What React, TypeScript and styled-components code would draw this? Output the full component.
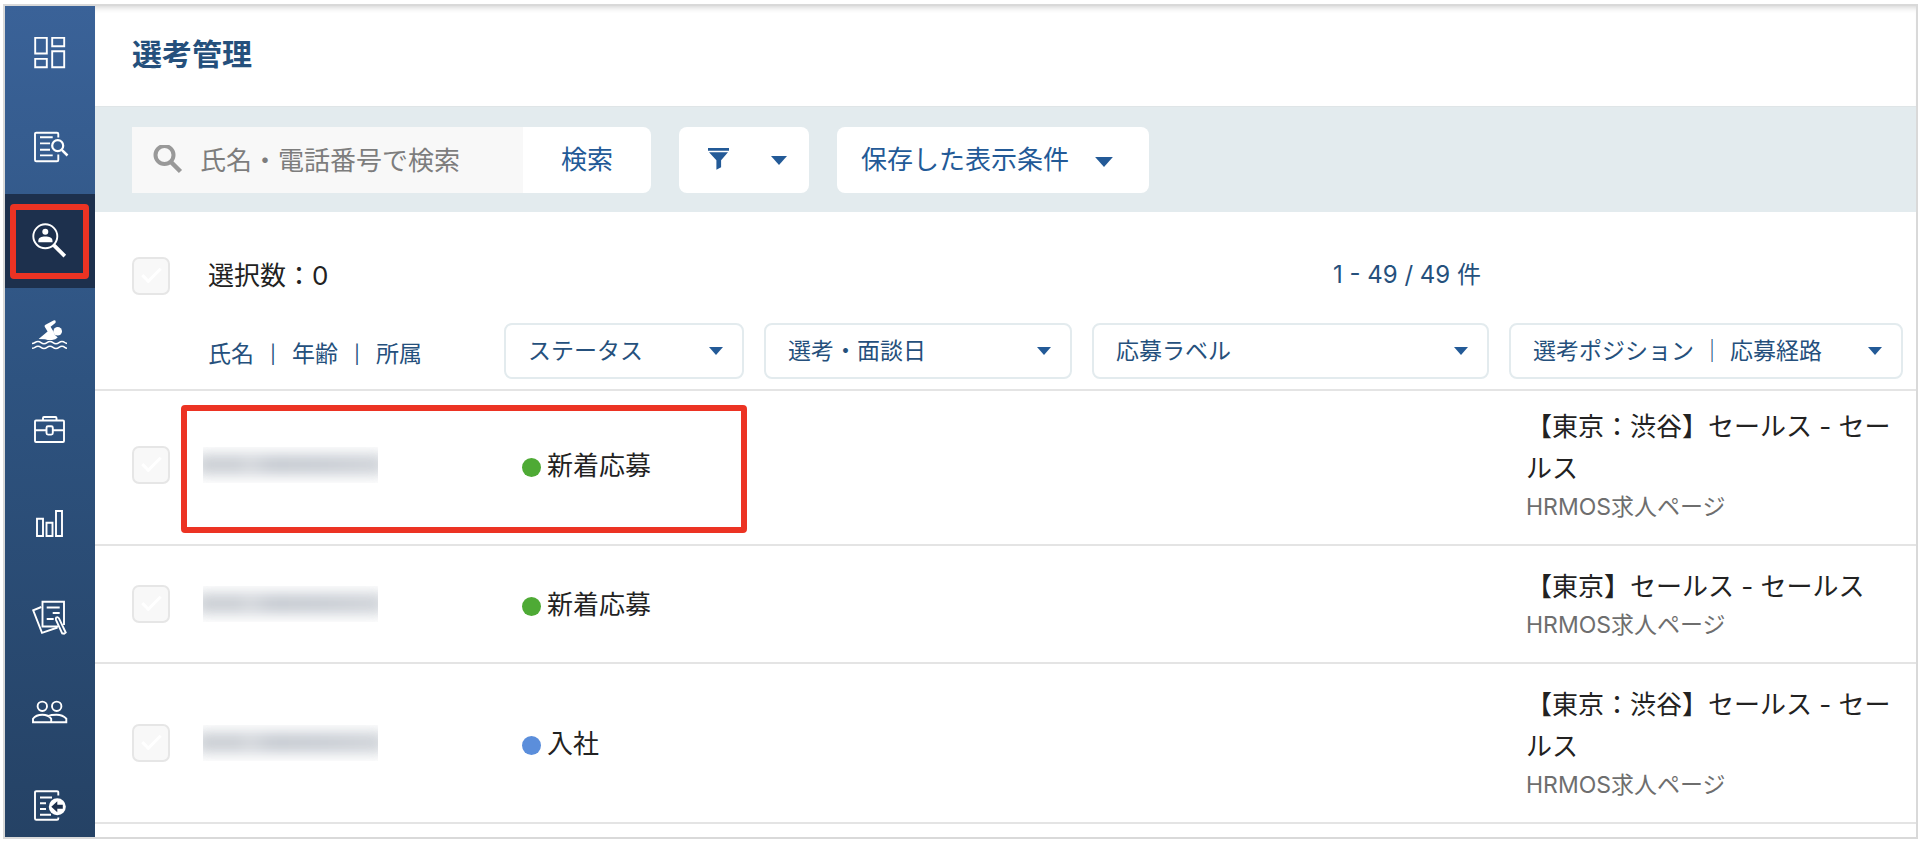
import React from "react";
import styled, { createGlobalStyle, css } from "styled-components";

const color = {
  navy: "#25507c",
  link: "#235a97",
  ink: "#222222",
  sub: "#6e6e6e",
  line: "#e4e4e4",
  frame: "#d9d9d9",
  field: "#f8f8f8",
  bar: "#e3ebee",
  active: "#1d304d",
  mark: "#ec3323",
};

const GlobalStyle = createGlobalStyle`
  *, *::before, *::after { box-sizing: border-box; }
  body {
    margin: 0;
    background: #fff;
    color: ${color.ink};
    font-family: Inter, "Noto Sans CJK JP", sans-serif;
    font-size: 26px;
    line-height: 42px;
  }
  button, input, select { font: inherit; color: inherit; margin: 0; }
`;

const Frame = styled.div`
  display: flex;
  height: calc(100vh - 11px);
  margin: 4px 8px 7px 3px;
  border: 2px solid ${color.frame};
  overflow: hidden;
`;

const Sidebar = styled.nav`
  flex: 0 0 90px;
  display: flex;
  flex-direction: column;
  overflow: hidden;
  background: linear-gradient(#3a6298, #2e5380 45%, #254265);
`;

const SideLink = styled.a<{ $active?: boolean }>`
  position: relative;
  flex: 0 0 94px;
  display: flex;
  align-items: center;
  justify-content: center;
  color: #fff;
  background: ${(p) => (p.$active ? color.active : "transparent")};
`;

const SideSvg = styled.svg`
  width: 36px;
  height: 36px;
  overflow: visible;
  fill: none;
  stroke: currentColor;
  stroke-width: 1.9;
`;

const markBorder = css`
  position: absolute;
  border: 6px solid ${color.mark};
  border-radius: 4px;
  pointer-events: none;
`;

const MenuMark = styled.span`
  ${markBorder}
  inset: 10px 6px 9px 5px;
`;

const RowMark = styled.span`
  ${markBorder}
  top: 14px;
  bottom: 11px;
  left: -7px;
  width: 566px;
`;

const Main = styled.main`
  flex: 1;
  min-width: 0;
`;

const PageHeader = styled.header`
  display: flex;
  align-items: center;
  height: 100px;
  padding: 0 37px 4px;
  box-shadow: inset 0 6px 6px -5px rgba(0, 0, 0, 0.2);
`;

const Title = styled.h1`
  margin: 0;
  font-size: 30px;
  font-weight: 700;
  color: ${color.navy};
`;

const Toolbar = styled.div`
  display: flex;
  gap: 28px;
  padding: 20px 37px 19px;
  border-top: 1px solid #dfe5e7;
  background: ${color.bar};
`;

const SearchForm = styled.form`
  display: flex;
  height: 66px;
`;

const SearchField = styled.label`
  display: flex;
  align-items: center;
  gap: 17px;
  width: 391px;
  padding: 0 0 0 21px;
  background: ${color.field};
`;

const SearchInput = styled.input`
  flex: 1;
  min-width: 0;
  height: 66px;
  padding: 0;
  border: 0;
  outline: 0;
  background: transparent;
  &::placeholder { color: #7d7d7d; opacity: 1; }
`;

const SearchButton = styled.button`
  width: 128px;
  padding: 0;
  border: 0;
  border-radius: 0 8px 8px 0;
  background: #fff;
  color: ${color.link};
`;

const ToolButton = styled.button<{ $gap: number }>`
  display: flex;
  align-items: center;
  gap: ${(p) => p.$gap}px;
  height: 66px;
  padding: 0 22px;
  border: 0;
  border-radius: 8px;
  background: #fff;
  color: ${color.link};
`;

const FilterButton = styled(ToolButton)`
  padding: 0 22px 0 29px;
`;

const SavedButton = styled(ToolButton)`
  padding: 0 36px 0 24px;
  > svg { margin-top: 4px; }
`;

const Summary = styled.div`
  display: flex;
  align-items: center;
  height: 111px;
  padding: 17px 435px 0 37px;
`;

const Selected = styled.span`
  margin-left: 38px;
`;

const Range = styled.span`
  margin-left: auto;
  padding-bottom: 2px;
  font-size: 24px;
  color: ${color.navy};
`;

const CheckBox = styled.input.attrs({ type: "checkbox" })`
  appearance: none;
  display: grid;
  place-items: center;
  width: 38px;
  height: 38px;
  border: 2px solid #e6e6e6;
  border-radius: 7px;
  background: ${color.field};
  &::before {
    content: "";
    width: 19px;
    height: 10px;
    margin-bottom: 6px;
    border: solid #fff;
    border-width: 0 0 3px 3px;
    transform: rotate(-45deg);
  }
`;

const Table = styled.table`
  width: 100%;
  table-layout: fixed;
  border-collapse: separate;
  border-spacing: 0;
`;

const Col = styled.col<{ $width?: number }>`
  width: ${(p) => (p.$width ? `${p.$width}px` : "auto")};
`;

const HeadCell = styled.th`
  padding: 0 10px 10px;
  border-bottom: 2px solid ${color.line};
  font-size: 23px;
  font-weight: 400;
  text-align: left;
  color: ${color.navy};
  &:first-child { padding: 0; }
  &:last-child { padding-right: 13px; }
`;

const NameHead = styled(HeadCell)`
  padding: 0 0 4px 20px;
`;

const Divider = styled.span`
  margin: 0 16px;
  font-size: 18px;
  vertical-align: 1px;
`;

const SelectBox = styled.div`
  position: relative;
  display: flex;
  align-items: center;
`;

const Select = styled.select`
  appearance: none;
  width: 100%;
  height: 56px;
  padding: 0 44px 0 22px;
  border: 2px solid ${color.bar};
  border-radius: 8px;
  background: #fff;
  color: ${color.navy};
`;

const CaretSvg = styled.svg`
  flex: none;
  fill: ${color.link};
`;

const SelectCaret = styled(CaretSvg)`
  position: absolute;
  right: 21px;
  pointer-events: none;
`;

const Cell = styled.td`
  position: relative;
  padding: 0;
  border-bottom: 2px solid ${color.line};
  vertical-align: middle;
`;

const CheckCell = styled(Cell)`
  padding-left: 37px;
`;

const NameCell = styled(Cell)`
  padding-left: 15px;
`;

const StatusCell = styled(Cell)`
  padding-left: 28px;
`;

const PositionCell = styled(Cell)`
  padding: 20px 13px 20px 27px;
`;

/* The first row is tucked 5px under the header line. */
const Row = styled.tr`
  &:first-child > td { padding-bottom: 5px; }
  &:first-child > ${PositionCell} {
    padding-top: 15px;
    padding-bottom: 20px;
  }
`;

const Masked = styled.div`
  position: relative;
  width: 175px;
  height: 36px;
  overflow: hidden;
  &::before, &::after {
    content: "";
    position: absolute;
    filter: blur(7px);
  }
  &::before {
    inset: 6px -8px 7px;
    background: #dfe2e6;
  }
  &::after {
    inset: 13px -4px 14px;
    background: linear-gradient(90deg, #bfc4ca 22%, #d3d6db 27%, #b6bcc5 40%, #bbc1c9 70%, #c8ccd2);
  }
`;

const Status = styled.span<{ $tone: string }>`
  display: flex;
  align-items: center;
  gap: 6px;
  padding-top: 2px;
  &::before {
    content: "";
    width: 19px;
    height: 19px;
    margin-top: 3px;
    border-radius: 50%;
    background: ${(p) => p.$tone};
  }
`;

const Position = styled.div`
  word-break: break-all;
`;

const Source = styled.div`
  font-size: 23px;
  line-height: 34px;
  color: ${color.sub};
`;

const Caret = ({ size = 16 }: { size?: number }) => (
  <CaretSvg width={size} height={size / 2 + 1} viewBox="0 0 16 9" aria-hidden>
    <path d="M0 0h16L8 9z" />
  </CaretSvg>
);

const menu = [
  {
    label: "ダッシュボード",
    icon: <path d="M3.2 2.9h11.6v15.6H3.2zM20.2 2.9h12v8.4h-12zM3.2 23.9h11.6v8.4H3.2zM20.2 16.3h12v16h-12z" />,
  },
  {
    label: "書類検索",
    icon: (
      <>
        <path d="M26.3 8.5V5q0-1.3-1.3-1.3H4.3Q3 3.7 3 5v26q0 1.3 1.3 1.3H25q1.3 0 1.3-1.3v-5.500" />
        <path d="M8 8.3h12.7M8 14.4h10M8 20.7h10M8 26.4h12.7" />
        <circle cx="25.7" cy="16.7" r="5.5" strokeWidth="2.2" />
        <path d="M29.8 20.8l5.7 5.7" strokeWidth="2.5" />
      </>
    ),
  },
  {
    label: "選考管理",
    active: true,
    icon: (
      <>
        <circle cx="13.3" cy="13.3" r="12" />
        <circle cx="13.3" cy="8.8" r="3" fill="currentColor" stroke="none" />
        <path d="M6.3 19.3v-1.5c0-3 3-4.3 7-4.3s7.2 1.3 7.2 4.3v1.5z" fill="currentColor" stroke="none" />
        <path d="M21.5 21.8l11.3 11.3" strokeWidth="3.8" />
      </>
    ),
  },
  {
    label: "タレントプール",
    icon: (
      <>
        <circle cx="25.7" cy="14.3" r="4.3" fill="currentColor" stroke="none" />
        <path
          d="M21.5 3.5q2-.6 2.2 1t-1 2L18.600 9.7l3.100 5.300q1 4 4 5.400-2 2.300-5.700 2.600T13 22.200l-6.400-.2 9-7.600-2.900-4.600q-.5-1.300.8-2z"
          fill="currentColor"
          stroke="none"
        />
        <path
          strokeWidth="1.600"
          d="M0 26.500c3 0 3-2 6-2s3 2.200 6 2.200 3-2.200 6-2.200 3 2.200 6 2.200 3-2.200 6-2.200 2.500 1.900 5 1.900M0 31.300c3 0 3-2 6-2s3 2.200 6 2.200 3-2.200 6-2.200 3 2.200 6 2.200 3-2.200 6-2.200 2.500 1.900 5 1.900"
        />
      </>
    ),
  },
  {
    label: "求人",
    icon: (
      <>
        <rect x="3" y="9.5" width="29" height="21.5" rx="1" />
        <path d="M11 9.500V7q0-1 1-1h11.500q1 0 1 1v2.500M3 19.300h11.500M21 19.300h11" />
        <rect x="14.5" y="15.3" width="6.3" height="8.3" rx="1.5" />
      </>
    ),
  },
  {
    label: "レポート",
    icon: <path d="M5 13.7h6v17.3H5zM14.500 17.7h6v13.3h-6zM24 6h6v25h-6z" />,
  },
  {
    label: "評価",
    icon: (
      <>
        <path d="M26 27.500H10.500V2.700h21.500V26" />
        <path d="M14.700 8.500h13M20.700 14h7M14.700 20h7" />
        <path d="M9.300 8L1.200 11.300 10 33.800l15.500-5.300" />
        <path d="M24.200 18.500q1.500-1 2.700.7l6.800 14.300-1.600 1.200-1.900-.4-6.200-13.500q-.4-1.300.2-2.300z" />
      </>
    ),
  },
  {
    label: "ユーザー",
    icon: (
      <>
        <circle cx="10.3" cy="13.3" r="4.7" />
        <circle cx="24.7" cy="13.3" r="4.7" />
        <path d="M1 29.200v-3.500q3-4 9.300-4t8.900 4v3.500zM16 23q3-1.300 8.500-1.300 6.300 0 9.800 4v3.500H19" />
      </>
    ),
  },
  {
    label: "外部連携",
    icon: (
      <>
        <path d="M26.300 8.500V5.500q0-1.300-1.300-1.300H4.300Q3 4.200 3 5.500v26q0 1.300 1.300 1.300H25q1.300 0 1.300-1.300v-1" />
        <path d="M8 10.500h12M8 16.300h6M8 22h6M8 27.700h11" />
        <circle cx="25.3" cy="19.7" r="8.5" fill="currentColor" stroke="none" />
        <path d="M19.300 19.700l6-5.500v3.500h5.500v4h-5.500v3.500z" fill={color.active} stroke="none" />
      </>
    ),
  },
];

const filters = ["ステータス", "選考・面談日", "応募ラベル", "選考ポジション ｜ 応募経路"];

const applicants = [
  { status: "新着応募", tone: "#4eaa35", position: "【東京：渋谷】セールス - セールス", marked: true },
  { status: "新着応募", tone: "#4eaa35", position: "【東京】セールス - セールス" },
  { status: "入社", tone: "#5b8edb", position: "【東京：渋谷】セールス - セールス" },
];

export default function App() {
  return (
    <>
      <GlobalStyle />
      <Frame>
        <Sidebar aria-label="メインメニュー">
          {menu.map((item) => (
            <SideLink key={item.label} href="#" aria-label={item.label} $active={item.active}>
              <SideSvg viewBox="0 0 36 36" aria-hidden>
                {item.icon}
              </SideSvg>
              {item.active && <MenuMark />}
            </SideLink>
          ))}
        </Sidebar>
        <Main>
          <PageHeader>
            <Title>選考管理</Title>
          </PageHeader>
          <Toolbar>
            <SearchForm onSubmit={(e) => e.preventDefault()}>
              <SearchField>
                <svg width="30" height="30" viewBox="0 0 30 30" fill="none" stroke="#999" strokeWidth="4" aria-hidden>
                  <circle cx="11.5" cy="10" r="9" />
                  <path d="M17.5 16.5l10 10" strokeWidth="4.5" />
                </svg>
                <SearchInput type="text" aria-label="氏名・電話番号で検索" placeholder="氏名・電話番号で検索" />
              </SearchField>
              <SearchButton type="submit">検索</SearchButton>
            </SearchForm>
            <FilterButton type="button" aria-label="絞り込み" $gap={42}>
              <svg width="21" height="24" viewBox="0 0 21 24" fill={color.link} aria-hidden>
                <path d="M0 0h21v2.7H0zM1 4.2h19l-6.9 8v7l-4.7 2.5v-9.5z" />
              </svg>
              <Caret />
            </FilterButton>
            <SavedButton type="button" $gap={26}>
              保存した表示条件
              <Caret size={18} />
            </SavedButton>
          </Toolbar>
          <Summary>
            <CheckBox aria-label="すべて選択" />
            <Selected>選択数：0</Selected>
            <Range>1 - 49 / 49 件</Range>
          </Summary>
          <Table>
            <colgroup>
              <Col $width={93} />
              <Col $width={306} />
              <Col $width={260} />
              <Col $width={328} />
              <Col />
              <Col />
            </colgroup>
            <thead>
              <tr>
                <HeadCell />
                <NameHead scope="col">
                  氏名<Divider>|</Divider>年齢<Divider>|</Divider>所属
                </NameHead>
                {filters.map((name) => (
                  <HeadCell key={name} scope="col">
                    <SelectBox>
                      <Select aria-label={name}>
                        <option>{name}</option>
                      </Select>
                      <SelectCaret width="14" height="8" viewBox="0 0 14 8" aria-hidden>
                        <path d="M0 0h14L7 8z" />
                      </SelectCaret>
                    </SelectBox>
                  </HeadCell>
                ))}
              </tr>
            </thead>
            <tbody>
              {applicants.map((a, i) => (
                <Row key={i}>
                  <CheckCell>
                    <CheckBox aria-label={`応募者${i + 1}を選択`} />
                  </CheckCell>
                  <NameCell>
                    <Masked />
                    {a.marked && <RowMark />}
                  </NameCell>
                  <StatusCell>
                    <Status $tone={a.tone}>{a.status}</Status>
                  </StatusCell>
                  <Cell />
                  <Cell />
                  <PositionCell>
                    <Position>{a.position}</Position>
                    <Source>HRMOS求人ページ</Source>
                  </PositionCell>
                </Row>
              ))}
            </tbody>
          </Table>
        </Main>
      </Frame>
    </>
  );
}
